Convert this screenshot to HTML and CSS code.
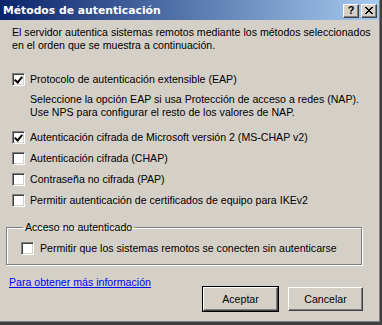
FILE: index.html
```html
<!DOCTYPE html>
<html lang="es">
<head>
<meta charset="utf-8">
<title>Métodos de autenticación</title>
<link rel="stylesheet" href="styles.css">
</head>
<body>
<div class="window">
  <div class="titlebar">
    <span class="title">Métodos de autenticación</span>
    <div class="tbtns">
      <span class="tbtn">?</span>
      <span class="tbtn close">
        <svg width="8" height="7" viewBox="0 0 8 7"><path d="M0 0h2v1h1v1h2V1h1V0h2v1H7v1H6v1H5v1h1v1h1v1h1v1H6V6H5V5H3v1H2v1H0V6h1V5h1V4h1V3H2V2H1V1H0z" fill="#000"/></svg>
      </span>
    </div>
  </div>
  <div class="content">
    <p class="intro">El servidor autentica sistemas remotos mediante los métodos seleccionados en el orden que se muestra a continuación.</p>
    <div class="opt first"><span class="cb checked"></span><span>Protocolo de autenticación extensible (EAP)</span></div>
    <p class="note">Seleccione la opción EAP si usa Protección de acceso a redes (NAP).<br>Use NPS para configurar el resto de los valores de NAP.</p>
    <div class="opt o2"><span class="cb checked"></span><span>Autenticación cifrada de Microsoft versión 2 (MS-CHAP v2)</span></div>
    <div class="opt o3"><span class="cb"></span><span>Autenticación cifrada (CHAP)</span></div>
    <div class="opt o3"><span class="cb"></span><span>Contraseña no cifrada (PAP)</span></div>
    <div class="opt o3"><span class="cb"></span><span>Permitir autenticación de certificados de equipo para IKEv2</span></div>
    <fieldset class="group">
      <legend>Acceso no autenticado</legend>
      <div class="opt"><span class="cb"></span><span>Permitir que los sistemas remotos se conecten sin autenticarse</span></div>
    </fieldset>
    <div class="bottom">
      <a class="link" href="#">Para obtener más información</a>
      <div class="buttons">
        <span class="btn default">Aceptar</span>
        <span class="btn">Cancelar</span>
      </div>
    </div>
  </div>
</div>
</body>
</html>
```
FILE: styles.css
```css
html, body {
  margin: 0;
  padding: 0;
  background: #d4d0c8;
}
.window {
  width: 382px;
  height: 325px;
  box-sizing: border-box;
  background: #d4d0c8;
  border-right: 2px solid #404040;
  border-bottom: 3px solid #404040;
  box-shadow: inset -1px -1px 0 #808080;
  font-family: "Liberation Sans", Arial, sans-serif;
  font-size: 10.6px;
  color: #000;
  display: flex;
  flex-direction: column;
}
.titlebar {
  height: 20px;
  margin-right: 1px;
  background: linear-gradient(to right, #0a246a, #a6caf0);
  display: flex;
  align-items: center;
  justify-content: space-between;
  padding-left: 3px;
}
.title {
  color: #fff;
  font-family: "DejaVu Sans", sans-serif;
  font-weight: bold;
  font-size: 10.8px;
}
.tbtns {
  display: flex;
  gap: 2px;
  margin-right: 2px;
  margin-top: 1px;
}
.tbtn {
  width: 16px;
  height: 14px;
  box-sizing: border-box;
  background: #d4d0c8;
  border-top: 1px solid #fff;
  border-left: 1px solid #fff;
  border-right: 1px solid #404040;
  border-bottom: 1px solid #404040;
  box-shadow: inset -1px -1px 0 #808080;
  display: flex;
  align-items: center;
  justify-content: center;
  font-family: "Liberation Sans", Arial, sans-serif;
  font-weight: bold;
  font-size: 11px;
  line-height: 1;
  padding-bottom: 1px;
}
.content {
  padding: 0 0 0 12px;
  display: flex;
  flex-direction: column;
  flex: 1;
}
.intro {
  margin: 6px 0 0 0;
  line-height: 13px;
  width: 362px;
}
.opt {
  display: flex;
  align-items: center;
  gap: 5px;
  height: 13px;
  line-height: 13px;
}
.opt.first { margin-top: 21px; }
.opt.o2 { margin-top: 12px; }
.opt.o3 { margin-top: 8px; }
.cb {
  width: 13px;
  height: 13px;
  box-sizing: border-box;
  background: #fff;
  border-top: 1px solid #808080;
  border-left: 1px solid #808080;
  border-right: 1px solid #fff;
  border-bottom: 1px solid #fff;
  box-shadow: inset 1px 1px 0 #404040, inset -1px -1px 0 #d4d0c8;
  flex: none;
  position: relative;
}
.cb.checked::after {
  content: "";
  position: absolute;
  left: 3px;
  top: 1px;
  width: 3px;
  height: 6px;
  border-right: 2px solid #000;
  border-bottom: 2px solid #000;
  transform: rotate(40deg);
}
.note {
  margin: 7px 0 0 18px;
  line-height: 13px;
}
.group {
  margin: 14px 0 0 -6px;
  width: 356px;
  height: 44px;
  box-sizing: border-box;
  border: 1px solid #808080;
  box-shadow: 1px 1px 0 #fff, inset 1px 1px 0 #fff;
  padding: 8px 0 0 14px;
  min-width: 0;
}
.group legend {
  padding: 0 2px;
  margin-left: 2px;
  line-height: 13px;
}
.group .opt { gap: 6px; }
.bottom {
  display: flex;
  margin-top: 11px;
}
.link {
  color: #0000ff;
  text-decoration: underline;
  margin-left: -3px;
  line-height: 13px;
  height: 13px;
}
.buttons {
  display: flex;
  gap: 10px;
  margin-left: auto;
  margin-right: 17px;
  margin-top: 11px;
}
.btn {
  width: 75px;
  height: 24px;
  box-sizing: border-box;
  border-top: 1px solid #fff;
  border-left: 1px solid #fff;
  border-right: 1px solid #404040;
  border-bottom: 1px solid #404040;
  box-shadow: inset -1px -1px 0 #808080;
  display: flex;
  align-items: center;
  justify-content: center;
}
.btn.default {
  outline: 1px solid #000;
}
```
